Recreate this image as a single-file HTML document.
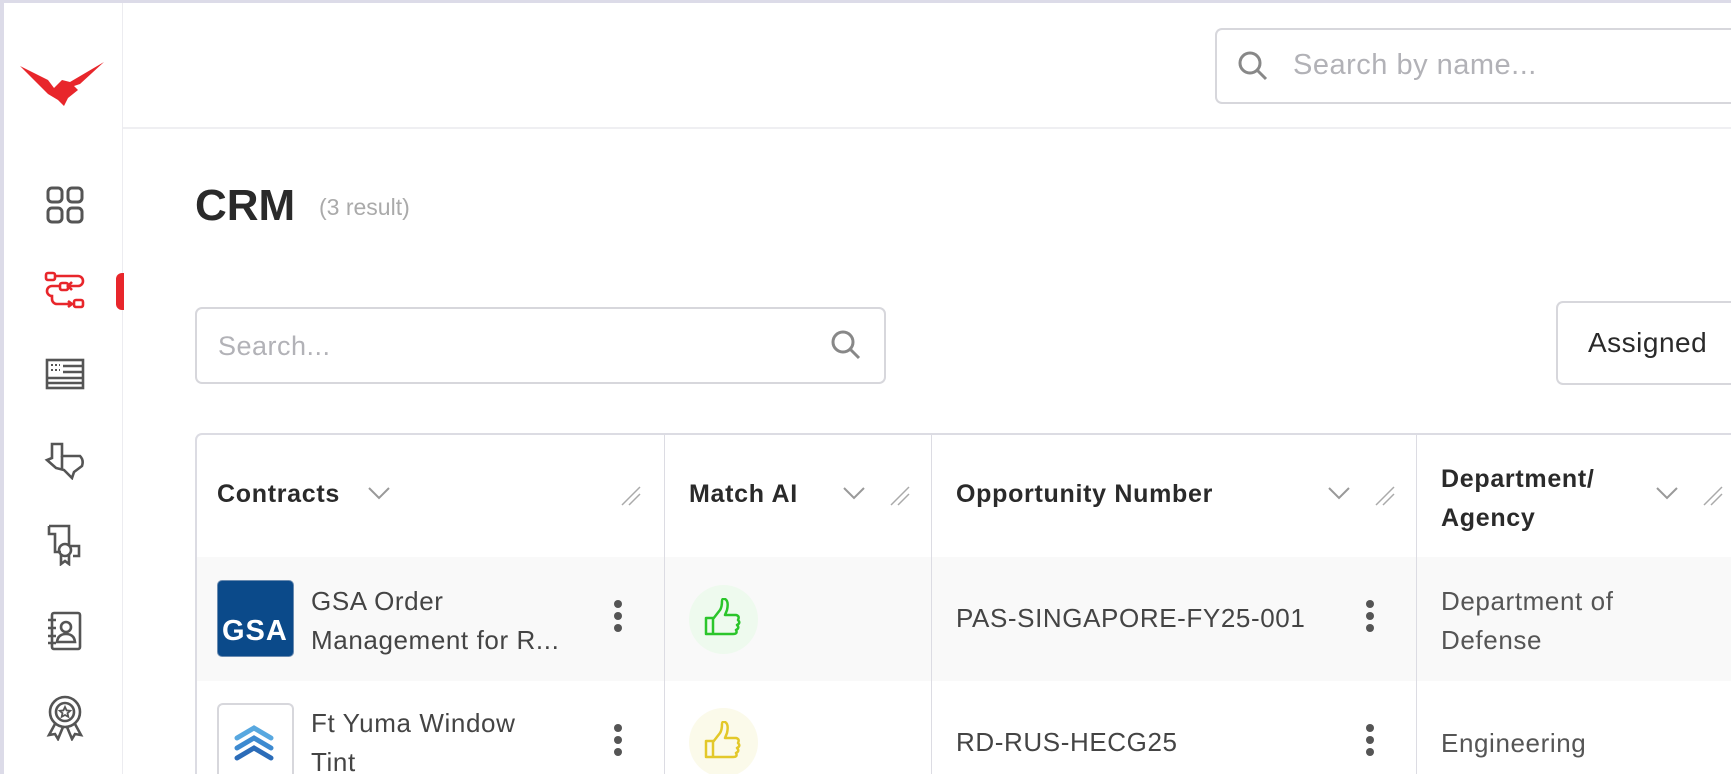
<!DOCTYPE html>
<html><head><meta charset="utf-8"><style>
*{box-sizing:border-box;margin:0;padding:0}
html,body{width:1731px;height:774px;overflow:hidden}
body{background:#fff;font-family:"Liberation Sans",sans-serif;position:relative;color:#333}
.a{position:absolute}
.frameT{left:0;top:0;width:1731px;height:3px;background:#dcdbe8}
.frameL{left:0;top:0;width:4px;height:774px;background:#dcdbe8}
.side{left:4px;top:3px;width:119px;height:771px;border-right:1px solid #ececf0;background:#fff}
.hdr{left:123px;top:127px;width:1608px;height:2px;background:#efeff2}
.inp{border:2px solid #d7d7dc;border-radius:7px;background:#fff}
.txt{white-space:nowrap}
.th{font-weight:bold;font-size:25px;color:#2a2a2a;letter-spacing:0.7px}
.td{font-size:26px;color:#444;letter-spacing:0.6px;white-space:nowrap}
.dots{width:8px}
.dots i{display:block;width:8px;height:8px;border-radius:50%;background:#555;margin-bottom:4px}
</style></head><body>
<div class="a frameT"></div><div class="a frameL"></div>
<div class="a side"></div>
<svg class="a" style="left:18px;top:60px" width="88" height="50" viewBox="0 0 88 50">
<path d="M2 6 L30 20 L36 28 L44 20 L52 22 L86 2 L62 24 L56 26 L60 30 L50 38 L46 46 L40 40 L30 34 L26 30 L22 26 Z" fill="#e8262b"/>
</svg>
<div class="a" style="left:116px;top:273px;width:8px;height:37px;background:#e8262b;border-radius:6px 0 0 6px"></div>
<svg class="a" style="left:45px;top:185px" width="40" height="40" viewBox="0 0 40 40" fill="none" stroke="#555" stroke-width="3">
<rect x="3" y="3" width="14" height="14" rx="4"/><rect x="23" y="3" width="14" height="14" rx="4"/><rect x="3" y="23" width="14" height="14" rx="4"/><rect x="23" y="23" width="14" height="14" rx="4"/></svg>
<svg class="a" style="left:44px;top:271px" width="42" height="38" viewBox="0 0 42 38" fill="none" stroke="#e8262b" stroke-width="2.6">
<rect x="2" y="2" width="9" height="7" rx="2"/><path d="M11 5 H34 a5 5 0 0 1 0 10 H24"/><path d="M28 11 l-4 4 4 4"/><rect x="16" y="12" width="8" height="7" rx="2"/><path d="M16 15 H8 a5 5 0 0 0 0 10 V28 a5 5 0 0 0 5 5 H26"/><path d="M24 30 l4 3 -4 3"/><rect x="30" y="29" width="9" height="7" rx="2"/></svg>
<svg class="a" style="left:45px;top:358px" width="40" height="32" viewBox="0 0 40 32" fill="none" stroke="#555" stroke-width="2.6">
<rect x="2" y="2" width="36" height="28"/><path d="M18 8H38M18 14H38M2 20H38M2 25H38"/><path d="M6 7h2M10 7h2M14 7h1M6 12h2M10 12h2M14 12h1" stroke-width="2"/></svg>
<svg class="a" style="left:44px;top:438px" width="42" height="42" viewBox="0 0 42 42" fill="none" stroke="#555" stroke-width="2.6">
<path d="M8 6 H18 V18 H36 Q40 22 38 28 L30 34 L28 40 L20 32 L12 30 L3 22 L8 20 Z"/><path d="M18 18 V32"/></svg>
<svg class="a" style="left:45px;top:522px" width="40" height="44" viewBox="0 0 40 44" fill="none" stroke="#555" stroke-width="2.6">
<path d="M4 4 H24 V24 M4 4 V12 H10 V30 H16"/><path d="M24 24 H34 V34 H28"/><circle cx="20" cy="28" r="6"/><path d="M16 33 V42 L20 39 L24 42 V33"/></svg>
<svg class="a" style="left:46px;top:611px" width="38" height="40" viewBox="0 0 38 40" fill="none" stroke="#555" stroke-width="2.6">
<rect x="6" y="2" width="28" height="36" rx="2"/><path d="M2 9h8M2 17h8M2 25h8M2 32h8"/><circle cx="20" cy="16" r="5"/><path d="M11 31 Q12 23 20 23 Q28 23 29 31 Z"/></svg>
<svg class="a" style="left:45px;top:695px" width="40" height="46" viewBox="0 0 40 46" fill="none" stroke="#555" stroke-width="2.6">
<circle cx="20" cy="17" r="15"/><circle cx="20" cy="17" r="9"/><path d="M20 12 l1.6 3.4 3.6.4-2.7 2.4.8 3.6L20 20l-3.3 1.8.8-3.6-2.7-2.4 3.6-.4z" stroke-width="1.8"/><path d="M10 29 L4 40 L10 39 L13 44 L18 32M30 29 L36 40 L30 39 L27 44 L22 32"/></svg>
<div class="a hdr"></div>
<div class="a inp" style="left:1215px;top:28px;width:516px;height:76px;border-right:none;border-radius:7px 0 0 7px"></div>
<svg class="a" style="left:1236px;top:49px" width="34" height="34" viewBox="0 0 34 34" fill="none" stroke="#888" stroke-width="3"><circle cx="14" cy="14" r="10"/><path d="M21 21 L30 30"/></svg>
<div class="a txt" style="left:1293px;top:49px;font-size:29px;color:#b2b2b7;letter-spacing:0.5px">Search by name...</div>
<div class="a txt" style="left:195px;top:181px;font-size:44px;font-weight:bold;color:#2a2a2a">CRM</div>
<div class="a txt" style="left:319px;top:194px;font-size:23px;color:#aaa">(3 result)</div>
<div class="a inp" style="left:195px;top:307px;width:691px;height:77px"></div>
<div class="a txt" style="left:218px;top:331px;font-size:27px;color:#b2b2b7;letter-spacing:0.5px">Search...</div>
<svg class="a" style="left:829px;top:328px" width="34" height="34" viewBox="0 0 34 34" fill="none" stroke="#888" stroke-width="3"><circle cx="14" cy="14" r="10"/><path d="M21 21 L30 30"/></svg>
<div class="a inp" style="left:1556px;top:301px;width:175px;height:84px;border-right:none;border-radius:7px 0 0 7px"></div>
<div class="a txt" style="left:1588px;top:327px;font-size:28px;color:#2a2a2a;letter-spacing:0.5px">Assigned</div>
<div class="a" style="left:195px;top:433px;width:1536px;height:341px;border:2px solid #dcdce3;border-right:none;border-bottom:none;border-radius:7px 0 0 0"></div>
<div class="a" style="left:197px;top:557px;width:1534px;height:124px;background:#f9f9f9"></div>
<div class="a" style="left:664px;top:435px;width:1px;height:339px;background:#dcdce3"></div>
<div class="a" style="left:931px;top:435px;width:1px;height:339px;background:#dcdce3"></div>
<div class="a" style="left:1416px;top:435px;width:1px;height:339px;background:#dcdce3"></div>
<div class="a txt th" style="left:217px;top:480px">Contracts</div>
<div class="a txt th" style="left:689px;top:480px">Match AI</div>
<div class="a txt th" style="left:956px;top:480px">Opportunity Number</div>
<div class="a txt th" style="left:1441px;top:460px;line-height:39px">Department/<br>Agency</div>
<svg width="0" height="0" style="position:absolute"><defs>
<g id="chev"><path d="M1 1 L11 11 L21 1" fill="none" stroke="#999" stroke-width="2"/></g>
<g id="rs"><path d="M2 20 L20 2 M9 20 L20 9" fill="none" stroke="#aaa" stroke-width="1.5"/></g>
<g id="up"><path d="M3 20 H10 V36 H3 Z M10 21 L17 12 Q19 9 19 3 Q19 0 22 1 Q26 3 24 12 L22 17 H33 Q37 18 35 22 Q38 25 34 27 Q37 30 33 32 Q35 36 30 36 H10" fill="none" stroke-width="2.5" stroke-linejoin="round"/></g>
</defs></svg>
<svg class="a" style="left:368px;top:487px" width="24" height="14"><use href="#chev"/></svg>
<svg class="a" style="left:620px;top:485px" width="22" height="22"><use href="#rs"/></svg>
<svg class="a" style="left:843px;top:487px" width="24" height="14"><use href="#chev"/></svg>
<svg class="a" style="left:889px;top:485px" width="22" height="22"><use href="#rs"/></svg>
<svg class="a" style="left:1328px;top:487px" width="24" height="14"><use href="#chev"/></svg>
<svg class="a" style="left:1374px;top:485px" width="22" height="22"><use href="#rs"/></svg>
<svg class="a" style="left:1656px;top:487px" width="24" height="14"><use href="#chev"/></svg>
<svg class="a" style="left:1702px;top:485px" width="22" height="22"><use href="#rs"/></svg>
<div class="a" style="left:217px;top:580px;width:77px;height:77px;background:#0b4a8a;border-radius:5px;border:1px solid #6a8bb0"></div>
<div class="a txt" style="left:222px;top:615px;font-size:29px;font-weight:bold;color:#fff;letter-spacing:1px">GSA</div>
<div class="a td" style="left:311px;top:582px;line-height:39px">GSA Order<br>Management for R...</div>
<div class="a dots" style="left:614px;top:600px"><i></i><i></i><i></i></div>
<div class="a" style="left:689px;top:585px;width:69px;height:69px;border-radius:50%;background:#eefaee"></div>
<svg class="a" style="left:703px;top:598px" width="40" height="40" viewBox="0 0 40 40" stroke="#2bc52b"><use href="#up"/></svg>
<div class="a td" style="left:956px;top:603px">PAS-SINGAPORE-FY25-001</div>
<div class="a dots" style="left:1366px;top:600px"><i></i><i></i><i></i></div>
<div class="a td" style="left:1441px;top:582px;line-height:39px;color:#555">Department of<br>Defense</div>
<div class="a" style="left:217px;top:703px;width:77px;height:71px;border:2px solid #d7d7dc;border-bottom:none;border-radius:6px 6px 0 0;background:#fff"></div>
<svg class="a" style="left:231px;top:720px" width="46" height="46" viewBox="0 0 46 46" fill="none" stroke-width="5" stroke-linecap="round"><path d="M6 18 L23 8 L40 18" stroke="#58a8e0"/><path d="M6 28 L23 18 L40 28" stroke="#3d8ad0"/><path d="M6 38 L23 28 L40 38" stroke="#2b6cb8"/></svg>
<div class="a td" style="left:311px;top:704px;line-height:39px;height:70px;overflow:hidden">Ft Yuma Window<br>Tint</div>
<div class="a dots" style="left:614px;top:724px"><i></i><i></i><i></i></div>
<div class="a" style="left:689px;top:708px;width:69px;height:66px;overflow:hidden"><div style="width:69px;height:69px;border-radius:50%;background:#fbfaea"></div></div>
<svg class="a" style="left:703px;top:721px" width="40" height="40" viewBox="0 0 40 40" stroke="#e3c82a"><use href="#up"/></svg>
<div class="a td" style="left:956px;top:727px">RD-RUS-HECG25</div>
<div class="a dots" style="left:1366px;top:724px"><i></i><i></i><i></i></div>
<div class="a td" style="left:1441px;top:728px;color:#555">Engineering</div>
</body></html>
